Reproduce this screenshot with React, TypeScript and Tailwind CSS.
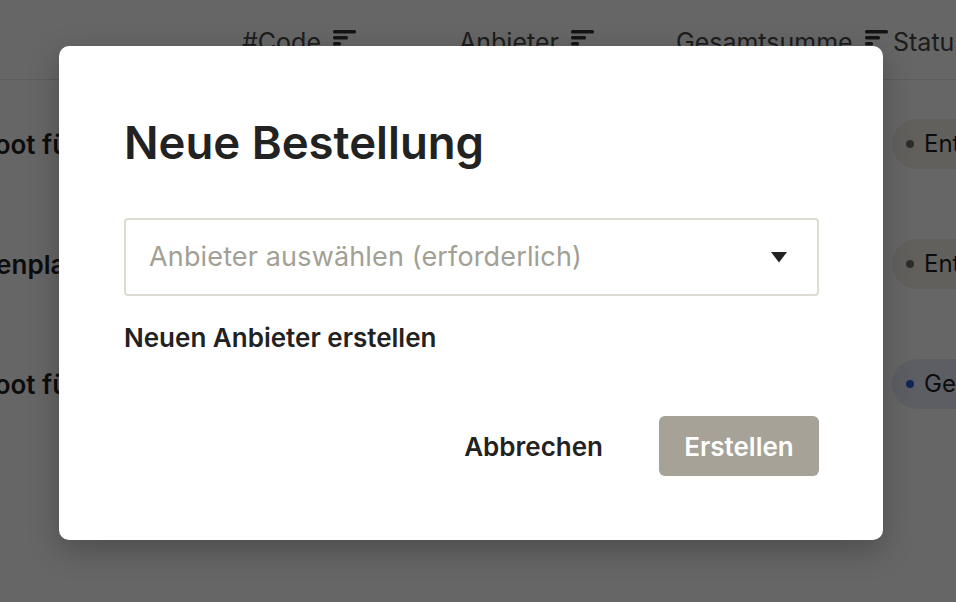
import { useState } from "react";

const columns = ["#Code", "Anbieter", "Gesamtsumme"];

const rows = [
  { name: "Roboot für Lager 3", offset: "-ml-[54px]", status: "Entwurf", tone: "draft" },
  { name: "Gartenplanung Hof", offset: "-ml-[58px]", status: "Entwurf", tone: "draft" },
  { name: "Roboot für Linie 2", offset: "-ml-[54px]", status: "Genehmigt", tone: "approved" },
];

function SortIcon() {
  return (
    <svg width="24" height="16" viewBox="0 0 24 16" className="shrink-0">
      <rect x="0" y="0" width="23" height="3.5" rx="1.5" fill="currentColor" />
      <rect x="0" y="6" width="15" height="3.5" rx="1.5" fill="currentColor" />
      <rect x="0" y="12" width="8" height="3.5" rx="1.5" fill="currentColor" />
    </svg>
  );
}

export default function App() {
  const [vendor, setVendor] = useState("");

  return (
    <div className="relative h-[602px] w-[956px] overflow-hidden bg-white font-['Inter',sans-serif] text-[#1f1f1f]">
      {/* page behind the dialog */}
      <div className="flex h-[80px] items-start border-b border-[#e6e6e6] bg-white pl-[242px] pt-[24px] text-[25px] text-[#4a4a4a]">
        {columns.map((c) => (
          <div key={c} className="flex w-[217px] shrink-0 items-center gap-[12px] whitespace-nowrap">
            <span>{c}</span>
            <span className="mt-[-10px] text-[#333]">
              <SortIcon />
            </span>
          </div>
        ))}
        <span className="shrink-0 whitespace-nowrap">Status</span>
      </div>

      <div className="flex flex-col pt-[4px]">
        {rows.map((r) => (
          <div key={r.name} className="flex h-[120px] items-center">
            <div className="w-[892px] shrink-0">
              <span className={`${r.offset} block whitespace-nowrap text-[26px] font-semibold`}>{r.name}</span>
            </div>
            <span
              className={`flex h-[50px] shrink-0 items-center gap-[10px] whitespace-nowrap rounded-full pl-[14px] pr-[20px] text-[24px] ${
                r.tone === "approved" ? "bg-[#e6ecfa]" : "bg-[#f3efe8]"
              }`}
            >
              <span
                className={`h-[8px] w-[8px] rounded-full ${
                  r.tone === "approved" ? "bg-[#2f5fe0]" : "bg-[#707070]"
                }`}
              />
              {r.status}
            </span>
          </div>
        ))}
      </div>

      {/* overlay + dialog */}
      <div className="absolute inset-0 bg-black/60 pl-[59px] pt-[46px]">
        <div className="flex w-[824px] flex-col rounded-[10px] bg-white pb-[64px] pl-[65px] pr-[64px] pt-[70px] shadow-[0_10px_30px_rgba(0,0,0,0.25)]">
          <h2 className="text-[45.5px] font-semibold leading-[54px] text-[#222]">Neue Bestellung</h2>

          <button
            type="button"
            onClick={() => setVendor(vendor)}
            className="mt-[48px] flex h-[78px] items-center justify-between rounded-[4px] border-2 border-[#dedcd2] pl-[23px] pr-[30px] text-left"
          >
            <span className="text-[27px] tracking-[0.15px] text-[#a29f95]">Anbieter auswählen (erforderlich)</span>
            <svg width="16" height="11" viewBox="0 0 16 11">
              <path d="M0 0H16L8 10.5Z" fill="#222" />
            </svg>
          </button>

          <button type="button" className="mt-[26px] self-start text-[26px] font-semibold leading-[32px] text-[#222]">
            Neuen Anbieter erstellen
          </button>

          <div className="mt-[62px] flex justify-end gap-[28px]">
            <button type="button" className="h-[60px] px-[28px] text-[26px] font-semibold text-[#222]">
              Abbrechen
            </button>
            <button
              type="button"
              disabled
              className="h-[60px] w-[160px] rounded-[6px] bg-[#a6a297] text-[26px] font-semibold text-white"
            >
              Erstellen
            </button>
          </div>
        </div>
      </div>
    </div>
  );
}
